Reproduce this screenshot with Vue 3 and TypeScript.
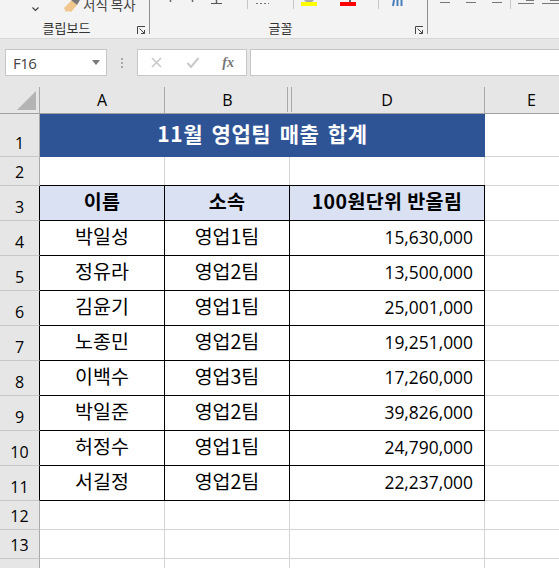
<script setup lang="ts">
interface Row { name: string; team: string; amount: string }
const rows: Row[] = [
  { name: '박일성', team: '영업1팀', amount: '15,630,000' },
  { name: '정유라', team: '영업2팀', amount: '13,500,000' },
  { name: '김윤기', team: '영업1팀', amount: '25,001,000' },
  { name: '노종민', team: '영업2팀', amount: '19,251,000' },
  { name: '이백수', team: '영업3팀', amount: '17,260,000' },
  { name: '박일준', team: '영업2팀', amount: '39,826,000' },
  { name: '허정수', team: '영업1팀', amount: '24,790,000' },
  { name: '서길정', team: '영업2팀', amount: '22,237,000' },
]
</script>

<template>
  <div class="app">
    <div class="ribbon">
      <section class="group clip">
        <div class="tools clip-tools">
          <svg class="chev" width="9" height="6" viewBox="0 0 9 6"><path d="M1.500 1.500 4.500 4.500 7.500 1.500" fill="none" stroke="#444" stroke-width="1.200"/></svg>
          <svg class="brush" width="20" height="13" viewBox="0 0 20 13"><path d="M0 8 8 0l5 5-6 7-3-1-2 1z" fill="#f0c68c"/><path d="M7 0h6l3 0-3 5z" fill="#777"/></svg>
          <span class="copy">서식 복사</span>
        </div>
        <div class="gname">클립보드</div>
        <svg class="launch" width="9" height="9" viewBox="0 0 9 9"><path d="M.5 8V.5H8M2.500 2.500l5 5M7.500 4v3.500H4" fill="none" stroke="#444"/></svg>
      </section>
      <section class="group font">
        <svg class="strip" width="277" height="9" viewBox="150 0 277 9">
          <path d="M170.500 0v2M192.500 0v2M216.500 0v3" stroke="#666" stroke-width="1.500"/>
          <path d="M211 3.500h11" stroke="#555"/>
          <path d="M247.500 0v9M293.500 0v9M378.500 0v9" stroke="#c6c6c6"/>
          <path d="M256 3.500h13" stroke="#777" stroke-dasharray="2 2"/>
          <path d="M304 0h10l-2 2h-6z" fill="#aaa"/>
          <rect x="301" y="2" width="16" height="4" fill="#ff0"/>
          <rect x="349" y="0" width="2" height="2" fill="#666"/>
          <rect x="340" y="2" width="16" height="4" fill="#f00"/>
          <path d="M393 6 394 0M397.500 6V0M401.500 6V0" stroke="#4a7ebb" stroke-width="2"/>
        </svg>
        <div class="gname">글꼴</div>
        <svg class="launch" width="9" height="9" viewBox="0 0 9 9"><path d="M.5 8V.5H8M2.500 2.500l5 5M7.500 4v3.500H4" fill="none" stroke="#444"/></svg>
      </section>
      <section class="group align">
        <svg class="strip" width="131" height="9" viewBox="428 0 131 9">
          <path d="M440 2.500h10M466 2.500h10M492 2.500h10M518 3.500h16M526 .5h8M542 3.500h17M550 .5h9" stroke="#777"/>
          <path d="M510.500 0v9" stroke="#c6c6c6"/>
        </svg>
      </section>
    </div>

    <div class="formula">
      <div class="namebox"><span>F16</span><i class="tri"></i></div>
      <div class="dots"><i></i><i></i><i></i></div>
      <div class="fbtns">
        <svg width="13" height="13" viewBox="0 0 13 13"><path d="M2 2 11 11M11 2 2 11" stroke="#c9c9c9" stroke-width="1.600"/></svg>
        <svg width="14" height="13" viewBox="0 0 14 13"><path d="M1.500 7 5 11 12.500 2" fill="none" stroke="#c9c9c9" stroke-width="2"/></svg>
        <span class="fx">fx</span>
      </div>
      <div class="finput"></div>
    </div>

    <div class="sheet">
      <div class="corner"><i></i></div>
      <div class="ch">A</div>
      <div class="ch before-hidden">B</div>
      <div class="ch after-hidden">D</div>
      <div class="ch">E</div>

      <div class="rh r1">1</div>
      <div class="title">11월 영업팀 매출 합계</div>
      <div class="c r1"></div>

      <div class="rh r2">2</div>
      <div class="c r2"></div><div class="c r2"></div><div class="c r2"></div><div class="c r2"></div>

      <div class="rh r3 edge">3</div>
      <div class="th">이름</div>
      <div class="th">소속</div>
      <div class="th">100원단위 반올림</div>
      <div class="c r3"></div>

      <template v-for="(row, i) in rows" :key="row.name">
        <div class="rh r4 edge">{{ i + 4 }}</div>
        <div class="td">{{ row.name }}</div>
        <div class="td">{{ row.team }}</div>
        <div class="td num">{{ row.amount }}</div>
        <div class="c r4"></div>
      </template>

      <template v-for="n in [12, 13, 14]" :key="n">
        <div class="rh r5">{{ n === 14 ? '' : n }}</div>
        <div class="c r5"></div><div class="c r5"></div><div class="c r5"></div><div class="c r5"></div>
      </template>
    </div>
  </div>
</template>

<style>
html, body { margin: 0; background: #fff; overflow: hidden; }
</style>

<style scoped>
.app {
  width: 559px;
  height: 568px;
  overflow: hidden;
  font-family: "Noto Sans CJK KR", "Open Sans", sans-serif;
  color: #000;
}
.ribbon {
  height: 39px;
  box-sizing: border-box;
  background: #f3f3f3;
  border-bottom: 1px solid #d6d6d6;
  display: flex;
  align-items: flex-start;
}
.group {
  position: relative;
  height: 34px;
  box-sizing: border-box;
  border-right: 1px solid #8f8f8f;
  display: flex;
  flex-direction: column;
}
.clip { width: 150px; }
.font { width: 278px; }
.align { width: 131px; border-right: 0; }
.tools, .strip { display: block; height: 9px; flex: none; }
.clip-tools { display: flex; align-items: flex-start; height: 20px; }
.strip { margin-bottom: 11px; }
.chev { margin: 6px 0 0 31px; flex: none; }
.brush { margin: 0 0 0 24px; flex: none; }
.copy {
  margin: -4px 0 0 -1px;
  font-size: 13.500px;
  line-height: 16px;
  color: #444;
  white-space: nowrap;
}
.gname {
  padding-right: 16px;
  margin-top: -1px;
  font-size: 13px;
  line-height: 18px;
  color: #333;
  text-align: center;
}
.launch { position: absolute; right: 3px; top: 26px; }

.formula {
  height: 48px;
  box-sizing: border-box;
  background: #e6e6e6;
  padding: 10px 0 11px 5px;
  display: flex;
  align-items: stretch;
}
.namebox {
  width: 102px;
  box-sizing: border-box;
  background: #fff;
  border: 1px solid #c6c6c6;
  display: flex;
  align-items: center;
  justify-content: space-between;
  padding: 0 6px 0 7px;
  font-family: "Open Sans", sans-serif;
  font-size: 15px;
  letter-spacing: -0.5px;
  color: #444;
}
.tri { width: 0; height: 0; border: 4px solid transparent; border-top: 5px solid #777; border-bottom: 0; }
.dots { width: 30px; display: flex; flex-direction: column; align-items: center; justify-content: center; gap: 2px; }
.dots i { width: 2px; height: 2px; background: #a8a8a8; }
.fbtns {
  width: 110px;
  box-sizing: border-box;
  background: #fff;
  border: 1px solid #c6c6c6;
  display: flex;
  align-items: center;
  justify-content: space-between;
  padding: 0 12px;
}
.fx { font-family: "Liberation Serif", serif; font-style: italic; font-weight: 700; font-size: 14px; color: #777; }
.finput { flex: 1; margin-left: 3px; background: #fff; border: 1px solid #c6c6c6; border-right: 0; }

.sheet {
  display: grid;
  grid-template-columns: 40px 125px 125px 195px 94px;
  grid-auto-rows: min-content;
  font-family: "Open Sans", "Noto Sans CJK KR", sans-serif;
}
.corner {
  height: 27px;
  box-sizing: border-box;
  background: #e6e6e6;
  border-right: 1px solid #a9a9a9;
  border-bottom: 1px solid #a0a0a0;
  position: relative;
}
.corner i {
  position: absolute;
  right: 3px;
  bottom: 3px;
  width: 0;
  height: 0;
  border-style: solid;
  border-width: 0 0 19px 19px;
  border-color: transparent transparent #b4b4b4 transparent;
}
.ch {
  height: 27px;
  box-sizing: border-box;
  background: #e6e6e6;
  border-right: 1px solid #a9a9a9;
  border-bottom: 1px solid #a0a0a0;
  font-size: 16px;
  line-height: 26px;
  text-align: center;
}
.before-hidden {
  border-right: 0;
  box-shadow: inset -2px -1px 0 #e6e6e6, inset -3px 0 0 #a9a9a9;
}
.after-hidden { box-shadow: inset 1px -1px 0 #e6e6e6, inset 2px 0 0 #a9a9a9; }
.rh {
  box-sizing: border-box;
  background: #e6e6e6;
  border-right: 1px solid #a9a9a9;
  border-bottom: 1px solid #c8c8c8;
  font-size: 16px;
  line-height: 16px;
  display: flex;
  align-items: flex-end;
  justify-content: center;
  padding-bottom: 5px;
}
.edge { border-right-color: #000; }
.r1 { height: 43px; }
.r2 { height: 29px; }
.r3, .r4 { height: 35px; }
.r5 { height: 29px; }
.c {
  box-sizing: border-box;
  border-right: 1px solid #d4d4d4;
  border-bottom: 1px solid #d4d4d4;
}
.title {
  grid-column: span 3;
  height: 43px;
  box-sizing: border-box;
  background: #2f5496;
  color: #fff;
  font-family: "Noto Sans CJK KR", sans-serif;
  font-weight: 700;
  font-size: 21px;
  line-height: 38px;
  text-align: center;
  letter-spacing: 0.600px;
  word-spacing: 3px;
}
.th, .td {
  box-sizing: border-box;
  border-right: 1px solid #000;
  border-bottom: 1px solid #000;
  height: 35px;
  font-family: "Noto Sans CJK KR", sans-serif;
  font-size: 19.500px;
  text-align: center;
}
.th {
  background: #d9e1f2;
  font-weight: 700;
  line-height: 30px;
  border-top: 1px solid #000;
  margin-top: -1px;
  height: 36px;
  letter-spacing: 0.400px;
}
.td { line-height: 30px; }
.num {
  text-align: right;
  padding-right: 11px;
  font-family: "Open Sans", sans-serif;
  font-size: 17.400px;
  line-height: 33px;
}
</style>
